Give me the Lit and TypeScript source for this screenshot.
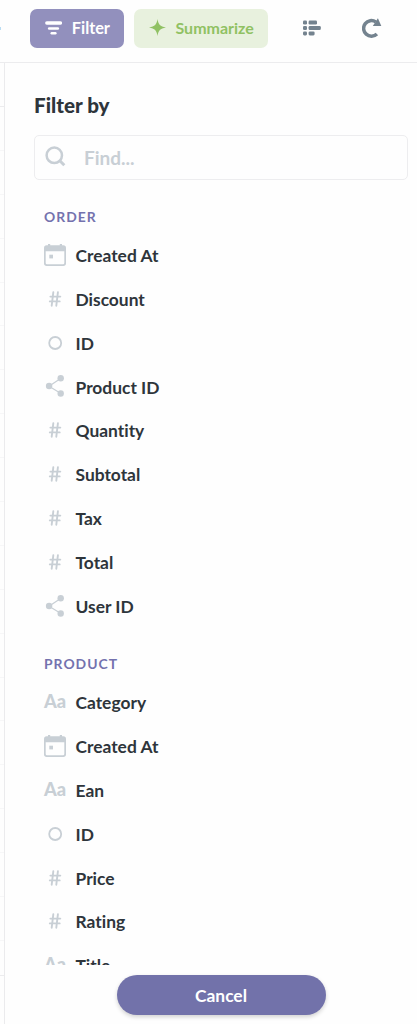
import { LitElement, html, css, svg } from "lit";
import { customElement, property } from "lit/decorators.js";

type Kind = "date" | "number" | "id" | "key" | "text";
interface Field { name: string; kind: Kind }

const SECTIONS: { title: string; fields: Field[] }[] = [
  {
    title: "Order",
    fields: [
      { name: "Created At", kind: "date" },
      { name: "Discount", kind: "number" },
      { name: "ID", kind: "id" },
      { name: "Product ID", kind: "key" },
      { name: "Quantity", kind: "number" },
      { name: "Subtotal", kind: "number" },
      { name: "Tax", kind: "number" },
      { name: "Total", kind: "number" },
      { name: "User ID", kind: "key" },
    ],
  },
  {
    title: "Product",
    fields: [
      { name: "Category", kind: "text" },
      { name: "Created At", kind: "date" },
      { name: "Ean", kind: "text" },
      { name: "ID", kind: "id" },
      { name: "Price", kind: "number" },
      { name: "Rating", kind: "number" },
      { name: "Title", kind: "text" },
    ],
  },
];

const GLYPHS = {
  date: svg`<path fill-rule="evenodd" d="M4 0h2.2v1.3h9.600V0H18v1.3h1.300A2.700 2.700 0 0 1 22 4v15.300A2.700 2.700 0 0 1 19.300 22H2.700A2.700 2.700 0 0 1 0 19.300V4A2.700 2.700 0 0 1 2.700 1.300H4zM1.700 7.200v11.800a1.300 1.300 0 0 0 1.300 1.300h16a1.300 1.300 0 0 0 1.300-1.300V7.200z"/><rect x="5.300" y="10.700" width="3.700" height="3.700"/>`,
  number: svg`<path d="M9.300 4.300 7.700 17.700M13.900 4.300 12.300 17.700M6.400 8.600h9.900M5.800 13.400h9.900" fill="none" stroke="currentColor" stroke-width="1.900" stroke-linecap="round"/>`,
  id: svg`<circle cx="11.200" cy="11" r="6" fill="none" stroke="currentColor" stroke-width="1.800"/>`,
  key: svg`<path d="M17 3.300 5 11.200 17 18.500" fill="none" stroke="currentColor" stroke-width="1.200"/><circle cx="16.700" cy="3.300" r="3.200"/><circle cx="5.100" cy="11" r="3.200"/><circle cx="16.700" cy="18.500" r="3.200"/>`,
};

@customElement("field-row")
class FieldRow extends LitElement {
  @property({ attribute: false }) field!: Field;

  static styles = css`
    :host { display: flex; align-items: center; height: 43.88px; padding-left: 10px; }
    .icon { display: flex; width: 22px; height: 22px; margin: 0 9.500px 2.200px 0; color: #c8cfd5; align-items: center; }
    svg { width: 22px; height: 22px; fill: currentColor; overflow: visible; }
    .aa { font-size: 18.200px; line-height: 22px; font-weight: 900; margin-bottom: 2px; }
    .name { font-size: 17.400px; line-height: 22px; font-weight: 700; color: #2e353b; white-space: nowrap; font-variant-ligatures: none; }
  `;

  render() {
    const { kind, name } = this.field;
    return html`
      <span class="icon">${kind === "text"
        ? html`<span class="aa">Aa</span>`
        : html`<svg viewBox="0 0 22 22">${GLYPHS[kind]}</svg>`}</span>
      <span class="name">${name}</span>
    `;
  }
}

@customElement("app-root")
class AppRoot extends LitElement {
  static styles = css`
    :host { display: flex; flex-direction: column; height: 1024px; overflow: hidden; background: #fefefe;
      font-family: Lato, "Liberation Sans", sans-serif; color: #2e353b; }
    * { box-sizing: border-box; }
    .toolbar { display: flex; height: 63px; flex: none; border-bottom: 1px solid #ececee; padding-top: 9px; }
    .sliver { width: 1px; height: 3px; margin-top: 18px; margin-right: 29.300px; background: #b9dcf3; }
    .btn { display: flex; align-items: center; height: 38.500px; border-radius: 7px; font: inherit;
      font-size: 16.300px; font-weight: 700; border: 0; padding: 0 0 1px; }
    .btn svg { flex: none; }
    .filter { width: 94.200px; background: #9290bd; color: #fff; padding-left: 15px; gap: 9.500px; }
    .sum { width: 134px; margin-left: 9.500px; background: #e8f1de; color: #90c163; padding-left: 15px; gap: 9.500px; font-size: 16px; }
    .tools { display: flex; color: #74838f; }
    .viz { width: 18px; height: 16px; margin: 11px 0 0 35.500px; fill: currentColor; }
    .refresh { width: 20px; height: 20px; margin: 9px 0 0 40.500px; }
    .body { display: flex; flex: 1; min-height: 0; }
    .grid { width: 5px; flex: none; border-right: 1px solid #ebebed; padding-top: 43px; }
    .head { height: 1px; background: #ececee; }
    .line { height: 43.900px; border-bottom: 1px solid #f7f7f8; }
    .last { height: 35px; border-bottom: 1px solid #ececee; }
    .panel { flex: 1; min-width: 0; display: flex; flex-direction: column; padding: 29px 9px 0 29px; }
    .title { margin: 0; font-size: 20.600px; line-height: 26px; font-weight: 900; }
    .search { display: flex; align-items: center; height: 44.500px; flex: none; margin-top: 17px;
      border: 1.500px solid #ededef; border-radius: 5px; padding-left: 10px; color: #c8cfd5; }
    .search svg { width: 21px; height: 21px; margin: 0 18px 2px 0; }
    .search span { font-size: 19px; font-weight: 700; }
    .list { height: 785px; flex: none; overflow: hidden; padding-top: 2.200px; }
    .section { height: 52.300px; padding: 24px 0 0 10px; font-size: 13.900px; line-height: 22px; font-weight: 700;
      letter-spacing: 1px; text-transform: uppercase; color: #7472ae; }
    .cancel { flex: none; width: 209px; height: 40px; margin: 10.500px 0 0 83px; border: 0; border-radius: 20px;
      background: #7272aa; color: #fff; font: inherit; font-size: 17.400px; font-weight: 700; padding: 0 1px 0 0;
      box-shadow: 0 2px 4px rgba(0, 0, 0, 0.18); }
  `;

  render() {
    return html`
      <div class="toolbar">
        <div class="sliver"></div>
        <button class="btn filter">
          <svg width="17" height="14" viewBox="0 0 17 14"><g fill="none" stroke="currentColor" stroke-linecap="round"><path d="M1.800 2h13.600" stroke-width="3.400"/><path d="M4.200 7.500h8.600" stroke-width="2.600"/><path d="M6.700 12.300h3.700" stroke-width="2.400"/></g></svg>
          <span>Filter</span>
        </button>
        <button class="btn sum">
          <svg width="17" height="17" viewBox="0 0 17 17"><path d="M8.500 0c.9 5.500 2.500 7.500 8.500 8.500-6 1-7.600 3-8.500 8.500C7.600 11.500 6 9.500 0 8.500 6 7.500 7.600 5.500 8.500 0z" fill="currentColor"/></svg>
          <span>Summarize</span>
        </button>
        <div class="tools">
          <svg class="viz" viewBox="0 0 18 16"><rect x="0" y=".6" width="4" height="4" rx="1.300"/><rect x="5.600" y=".6" width="8.400" height="4" rx="1.300"/><rect x="0" y="6" width="4" height="4" rx="1.300"/><rect x="5.600" y="6" width="12.200" height="4" rx="1.300"/><rect x="0" y="11.400" width="4" height="4" rx="1.300"/><rect x="5.600" y="11.400" width="6" height="4" rx="1.300"/></svg>
          <svg class="refresh" viewBox="0 0 20 20"><path d="M13.800 3.900A7.800 7.800 0 1 0 14.900 15.900" fill="none" stroke="currentColor" stroke-width="3.500"/><path d="M15.900.2 19.300 8H10.800z" fill="currentColor"/></svg>
        </div>
      </div>
      <div class="body">
        <div class="grid">
          <div class="head"></div>
          ${Array.from({ length: 19 }, () => html`<div class="line"></div>`)}
          <div class="last"></div>
        </div>
        <div class="panel">
          <h1 class="title">Filter by</h1>
          <div class="search">
            <svg viewBox="0 0 21 21" fill="none" stroke="currentColor"><circle cx="9.300" cy="9.300" r="7.700" stroke-width="2.500"/><path d="m14.800 14.800 4.500 4.500" stroke-width="3"/></svg>
            <span>Find...</span>
          </div>
          <div class="list">
            ${SECTIONS.map((s) => html`
              <div class="section">${s.title}</div>
              ${s.fields.map((f) => html`<field-row .field=${f}></field-row>`)}
            `)}
          </div>
          <button class="cancel">Cancel</button>
        </div>
      </div>
    `;
  }
}
